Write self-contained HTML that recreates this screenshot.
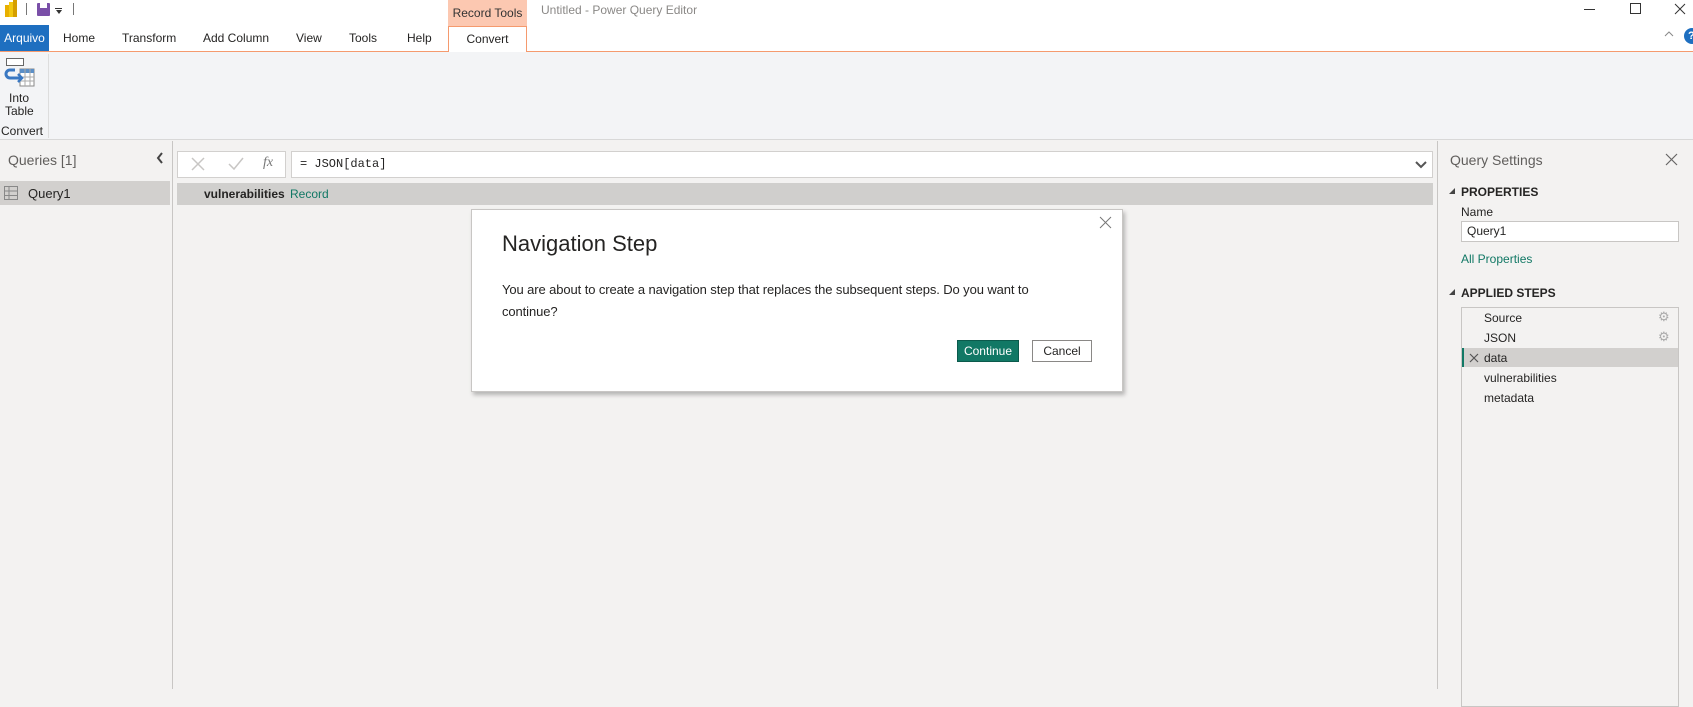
<!DOCTYPE html>
<html><head><meta charset="utf-8"><style>
*{box-sizing:border-box;margin:0;padding:0}
body{width:1693px;height:689px;overflow:hidden;background:#f3f2f1;font-family:"Liberation Sans",sans-serif;font-size:12px;color:#252423;position:relative}
.a{position:absolute;white-space:nowrap}
</style></head><body>
<!-- title bar -->
<div class="a" style="left:0;top:0;width:1693px;height:52px;background:#fff"></div>
<div class="a" style="left:5px;top:5px;width:4px;height:12px;background:#e8b000"></div>
<div class="a" style="left:9px;top:2px;width:4px;height:15px;background:#f2c811"></div>
<div class="a" style="left:13px;top:0px;width:4px;height:17px;background:#d59f00"></div>
<div class="a" style="left:26px;top:3px;width:1px;height:12px;background:#777"></div>
<div class="a" style="left:37px;top:3px;width:13px;height:13px;background:#7a4fa8;border-radius:1px"></div>
<div class="a" style="left:40px;top:3px;width:7px;height:5px;background:#fff"></div>
<div class="a" style="left:55px;top:8px;width:7px;height:1px;background:#333"></div>
<div class="a" style="left:56px;top:10px;width:0;height:0;border-left:3px solid transparent;border-right:3px solid transparent;border-top:4px solid #333"></div>
<div class="a" style="left:73px;top:3px;width:1px;height:12px;background:#777"></div>
<div class="a" style="left:448px;top:0;width:79px;height:27px;background:#fcc8b1;text-align:center;line-height:26px;font-size:12px;color:#333">Record Tools</div>
<div class="a" style="left:541px;top:3px;font-size:12px;color:#8a8886">Untitled - Power Query Editor</div>
<div class="a" style="left:1584px;top:9px;width:11px;height:1px;background:#333"></div>
<div class="a" style="left:1630px;top:3px;width:11px;height:11px;border:1px solid #333"></div>
<svg class="a" style="left:1674px;top:3px" width="12" height="12"><path d="M1 1l10 10M11 1L1 11" stroke="#333" stroke-width="1"/></svg>
<!-- tabs -->
<div class="a" style="left:0;top:25px;width:49px;height:26px;background:#1e6fc0;color:#fff;line-height:26px;text-align:center;font-size:12px">Arquivo</div>
<div class="a" style="left:63px;top:31px">Home</div>
<div class="a" style="left:122px;top:31px">Transform</div>
<div class="a" style="left:203px;top:31px">Add Column</div>
<div class="a" style="left:296px;top:31px">View</div>
<div class="a" style="left:349px;top:31px">Tools</div>
<div class="a" style="left:407px;top:31px">Help</div>
<div class="a" style="left:0;top:51px;width:1693px;height:1px;background:#f59a6e"></div>
<div class="a" style="left:448px;top:26px;width:79px;height:26px;background:#fff;border:1px solid #f59a6e;border-bottom:none;text-align:center;line-height:24px">Convert</div>
<svg class="a" style="left:1664px;top:31px" width="10" height="6"><path d="M1 5l4-4 4 4" fill="none" stroke="#888"/></svg>
<div class="a" style="left:1684px;top:28px;width:16px;height:16px;border-radius:8px;background:#1e6fc0;color:#fff;font-size:11px;font-weight:bold;line-height:16px;padding-left:4px">?</div>
<!-- ribbon -->
<div class="a" style="left:0;top:52px;width:1693px;height:88px;background:#f3f4f6;border-bottom:1px solid #d8d8d8"></div>
<div class="a" style="left:6px;top:58px;width:18px;height:8px;border:1px solid #666;background:#fff"></div>
<svg class="a" style="left:3px;top:66px" width="32" height="22" viewBox="0 0 32 22"><rect x="17" y="3" width="14" height="17" fill="#fff" stroke="#888"/><rect x="17" y="3" width="14" height="4" fill="#5b8fc7"/><path d="M17 11h14M17 15h14M22 3v17M27 3v17" stroke="#aaa"/><path d="M12 4H7a4 4 0 0 0 0 8h11" fill="none" stroke="#3a78c2" stroke-width="3"/><path d="M15 8l4 4-4 4" fill="none" stroke="#3a78c2" stroke-width="2.5"/></svg>
<div class="a" style="left:9px;top:91px;font-size:12px">Into</div>
<div class="a" style="left:5px;top:104px;font-size:12px">Table</div>
<div class="a" style="left:1px;top:124px;font-size:12px">Convert</div>
<div class="a" style="left:48px;top:54px;width:1px;height:84px;background:#ddd"></div>
<!-- queries panel -->
<div class="a" style="left:172px;top:141px;width:1px;height:548px;background:#c8c6c4"></div>
<div class="a" style="left:8px;top:152px;font-size:14px;color:#605e5c">Queries [1]</div>
<svg class="a" style="left:156px;top:152px" width="8" height="12"><path d="M6 1L2 6l4 5" fill="none" stroke="#444" stroke-width="2"/></svg>
<div class="a" style="left:0;top:181px;width:170px;height:24px;background:#d2d0ce"></div>
<svg class="a" style="left:4px;top:186px" width="14" height="14"><rect x=".5" y=".5" width="13" height="13" fill="none" stroke="#888"/><path d="M.5 5h13M.5 9.5h13M5 .5v13" stroke="#888"/></svg>
<div class="a" style="left:28px;top:186px;font-size:13px">Query1</div>
<!-- formula bar -->
<div class="a" style="left:177px;top:151px;width:109px;height:27px;background:#fff;border:1px solid #d2d0ce"></div>
<svg class="a" style="left:191px;top:157px" width="14" height="14"><path d="M1 1l12 12M13 1L1 13" stroke="#c8c6c4" stroke-width="1.5"/></svg>
<svg class="a" style="left:228px;top:157px" width="16" height="14"><path d="M1 7l5 5L15 1" fill="none" stroke="#c8c6c4" stroke-width="1.5"/></svg>
<div class="a" style="left:263px;top:155px;font-family:'Liberation Serif',serif;font-style:italic;font-size:14px;color:#777">fx</div>
<div class="a" style="left:291px;top:151px;width:1142px;height:27px;background:#fff;border:1px solid #d2d0ce"></div>
<div class="a" style="left:300px;top:157px;font-family:'Liberation Mono',monospace;font-size:12px">= JSON[data]</div>
<svg class="a" style="left:1414px;top:160px" width="14" height="10"><path d="M2 2l5 5 5-5" fill="none" stroke="#555" stroke-width="2"/></svg>
<div class="a" style="left:177px;top:183px;width:1256px;height:22px;background:#d0cfcd"></div>
<div class="a" style="left:204px;top:187px;font-weight:bold;font-size:12px">vulnerabilities</div>
<div class="a" style="left:290px;top:187px;font-size:12px;color:#117865">Record</div>
<!-- dialog -->
<div class="a" style="left:471px;top:209px;width:652px;height:183px;background:#fff;border:1px solid #c8c6c4;box-shadow:2px 3px 4px rgba(0,0,0,.25)"></div>
<svg class="a" style="left:1099px;top:216px" width="13" height="13"><path d="M1 1l11 11M12 1L1 12" stroke="#777" stroke-width="1"/></svg>
<div class="a" style="left:502px;top:231px;font-size:22px;color:#252423">Navigation Step</div>
<div class="a" style="left:502px;top:279px;font-size:13px;color:#252423;line-height:22px;letter-spacing:-0.1px">You are about to create a navigation step that replaces the subsequent steps. Do you want to<br>continue?</div>
<div class="a" style="left:957px;top:340px;width:62px;height:22px;background:#117865;border:1px solid #0b5a4c;color:#fff;font-size:12px;text-align:center;line-height:20px">Continue</div>
<div class="a" style="left:1032px;top:340px;width:60px;height:22px;background:#fff;border:1px solid #8a8886;font-size:12px;text-align:center;line-height:20px">Cancel</div>
<!-- right panel -->
<div class="a" style="left:1437px;top:141px;width:1px;height:548px;background:#c8c6c4"></div>
<div class="a" style="left:1450px;top:152px;font-size:14px;color:#605e5c">Query Settings</div>
<svg class="a" style="left:1665px;top:153px" width="13" height="13"><path d="M1 1l11 11M12 1L1 12" stroke="#666" stroke-width="1.2"/></svg>
<div class="a" style="left:1449px;top:188px;width:0;height:0;border-left:6px solid transparent;border-bottom:6px solid #444"></div>
<div class="a" style="left:1461px;top:185px;font-weight:bold;font-size:12px">PROPERTIES</div>
<div class="a" style="left:1461px;top:205px;font-size:12px">Name</div>
<div class="a" style="left:1461px;top:221px;width:218px;height:21px;background:#fff;border:1px solid #c8c6c4;padding-left:5px;line-height:19px;font-size:12px">Query1</div>
<div class="a" style="left:1461px;top:252px;font-size:12px;color:#117865">All Properties</div>
<div class="a" style="left:1449px;top:289px;width:0;height:0;border-left:6px solid transparent;border-bottom:6px solid #444"></div>
<div class="a" style="left:1461px;top:286px;font-weight:bold;font-size:12px">APPLIED STEPS</div>
<div class="a" style="left:1461px;top:307px;width:218px;height:400px;border:1px solid #c8c6c4"></div>
<div class="a" style="left:1462px;top:348px;width:216px;height:19px;background:#d2d0ce"></div>
<div class="a" style="left:1462px;top:348px;width:2px;height:19px;background:#117865"></div>
<div class="a" style="left:1484px;top:311px;font-size:12px">Source</div>
<div class="a" style="left:1658px;top:309px;font-size:13px;color:#aaa">⚙</div>
<div class="a" style="left:1484px;top:331px;font-size:12px">JSON</div>
<div class="a" style="left:1658px;top:329px;font-size:13px;color:#aaa">⚙</div>
<svg class="a" style="left:1469px;top:353px" width="10" height="10"><path d="M1 1l8 8M9 1L1 9" stroke="#555" stroke-width="1.2"/></svg>
<div class="a" style="left:1484px;top:351px;font-size:12px">data</div>
<div class="a" style="left:1484px;top:371px;font-size:12px">vulnerabilities</div>
<div class="a" style="left:1484px;top:391px;font-size:12px">metadata</div>
</body></html>
